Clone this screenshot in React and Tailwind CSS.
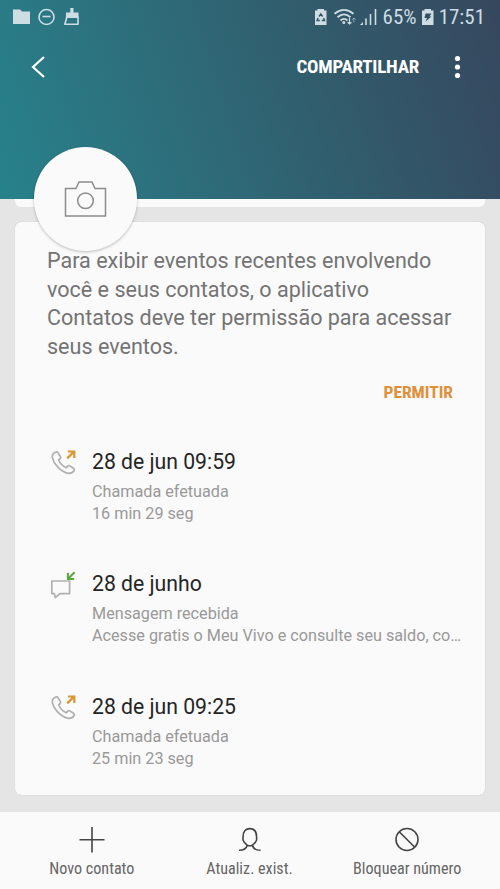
const events = [
  { type: "call", title: "28 de jun 09:59", label: "Chamada efetuada", detail: "16 min 29 seg" },
  {
    type: "message",
    title: "28 de junho",
    label: "Mensagem recebida",
    detail: "Acesse gratis o Meu Vivo e consulte seu saldo, co…",
  },
  { type: "call", title: "28 de jun 09:25", label: "Chamada efetuada", detail: "25 min 23 seg" },
];

function CallIcon() {
  return (
    <svg width="28" height="28" viewBox="0 0 28 28" fill="none">
      <path
        d="M5.8 4.6C3.9 5.6 3 7.4 3.4 9.8C4.6 15.8 11.6 23.6 18.6 25.2C21.6 25.8 23.8 24.6 25.2 22.5C25.6 21.7 25.4 21 24.7 20.5L20.9 17.9C20.1 17.4 19.3 17.6 18.7 18.2L17.2 19.8C14.2 18.4 10.8 14.8 9.6 11.8L11.2 10.5C11.8 10 11.9 9.3 11.5 8.6L9 4.7C8.4 3.9 7 3.9 5.8 4.6Z"
        stroke="#b0b0b0"
        strokeWidth="1.7"
        strokeLinejoin="round"
      />
      <path d="M18.2 10.4L25 3.6M18.8 3.5H25.3V10" stroke="#d99632" strokeWidth="2.2" />
    </svg>
  );
}

function MessageIcon() {
  return (
    <svg width="28" height="30" viewBox="0 0 28 30" fill="none">
      <path d="M2.8 11H20.6V23.6H11L6.2 27.6L5.4 23.6H2.8Z" stroke="#b0b0b0" strokeWidth="1.7" strokeLinejoin="round" />
      <path d="M25.6 2.2L19.3 8.5M18.9 2.8V9H25.2" stroke="#5aa83c" strokeWidth="2" />
    </svg>
  );
}

function StatusBar() {
  return (
    <div className="flex h-[34px] items-center justify-between pl-3 pr-[15px] text-[#cddde3]">
      <svg width="70" height="22" viewBox="12 6 70 22" fill="none">
        <path d="M13 9.5H20L22 11.5H30V24H13Z" fill="currentColor" />
        <circle cx="46.5" cy="17" r="7.5" stroke="currentColor" strokeWidth="1.6" />
        <path d="M42.5 16.5H50.5" stroke="currentColor" strokeWidth="1.6" />
        <path d="M66.5 17V18.5L64.8 24.2H78V17Z" stroke="currentColor" strokeWidth="1.6" strokeLinejoin="round" />
        <path d="M70.3 8H73.5V12.5H78.5V18H66V12.5H70.3Z" fill="currentColor" />
      </svg>
      <div className="flex items-center">
        <svg width="64" height="22" viewBox="314 6 64 22" fill="none">
          <path d="M315 10.5H317.5V9H324V10.5H326.5V25H315Z" fill="currentColor" />
          <path d="M319 16.5L320.8 14L322.6 16.5M323.6 18L324.6 20.5H321.8M319.8 20.5H317L318 18" stroke="#355567" strokeWidth="1.4" />
          <path d="M334.5 13.8Q344 6 353.5 13.8M337.5 17.2Q344 11.5 350.5 17.2M340.5 20.5Q344 17.3 347.5 20.5" stroke="currentColor" strokeWidth="1.8" />
          <circle cx="343.8" cy="22.6" r="1.5" fill="currentColor" />
          <path d="M349.5 18V24M347.6 22.2L349.5 24L351.4 22.2" stroke="currentColor" strokeWidth="1.2" />
          <path d="M353.8 22.5V18M352 19.8L353.8 18L355.6 19.8" stroke="currentColor" strokeWidth="1" opacity=".5" />
          <path d="M360 25L363 22V25Z" fill="currentColor" />
          <path d="M366 25V18.5M370.5 25V14M375.5 25V9" stroke="currentColor" strokeWidth="1.6" />
        </svg>
        <span className="ml-[5px] font-['Roboto_Condensed',Roboto,sans-serif] text-[21px] leading-none">65%</span>
        <svg className="ml-[5px] mr-[5px]" width="12" height="18" viewBox="0 0 12 18">
          <path d="M0 2.5H2.5V1H9V2.5H11.5V17H0Z" fill="currentColor" />
          <path d="M3.5 5.5H9.5L7.5 8.5H9.5L3.5 13.5L5 10H2.5Z" fill="#374f64" />
        </svg>
        <span className="font-['Roboto_Condensed',Roboto,sans-serif] text-[21px] leading-none">17:51</span>
      </div>
    </div>
  );
}

function Header() {
  return (
    <header className="relative h-[199px] bg-linear-[72deg,#27828b_0%,#2d707d_30%,#315c6c_64%,#36475e_100%]">
      <StatusBar />
      <div className="flex h-[66px] items-center pl-[30px] pr-[39.5px] text-white">
        <svg width="16" height="24" viewBox="0 0 16 24" fill="none">
          <path d="M14 2L3 12L14 22" stroke="currentColor" strokeWidth="2.2" />
        </svg>
        <span className="ml-auto font-['Roboto_Condensed',Roboto,sans-serif] text-[19px] font-bold tracking-[-0.25px]">COMPARTILHAR</span>
        <svg className="ml-[34.5px]" width="7" height="24" viewBox="0 0 7 24" fill="currentColor">
          <circle cx="3.5" cy="3.5" r="2.6" />
          <circle cx="3.5" cy="12" r="2.6" />
          <circle cx="3.5" cy="20.5" r="2.6" />
        </svg>
      </div>
      <div className="absolute left-[34px] top-[147px] flex h-[104px] w-[103px] items-center justify-center rounded-full bg-[#fafafa] shadow-[0_1px_3px_rgba(0,0,0,0.25)]">
        <svg width="44" height="38" viewBox="0 0 44 38" fill="none" stroke="#8c8c8c" strokeWidth="1.5">
          <path d="M1.5 8.5H12L15 2H28L31 8.5H41.5V36H1.5Z" />
          <circle cx="21.5" cy="20.7" r="7.8" />
        </svg>
      </div>
    </header>
  );
}

function EventRow({ event }) {
  return (
    <li className="flex h-[122.25px]">
      <div className="w-[45px] shrink-0 pl-0.5">{event.type === "call" ? <CallIcon /> : <MessageIcon />}</div>
      <div className="min-w-0 flex-1 whitespace-nowrap">
        <p className="text-[21.2px] leading-[27px] text-[#252525]">{event.title}</p>
        <p className="mt-1.5 text-[16.2px] leading-[22px] text-[#999]">{event.label}</p>
        <p className="text-[16.2px] leading-[22px] text-[#999]">{event.detail}</p>
      </div>
    </li>
  );
}

function BottomAction({ label, children }) {
  return (
    <button className="flex flex-1 flex-col items-center pt-[13px] text-[#444]">
      {children}
      <span className="mt-[5px] whitespace-nowrap font-['Roboto_Condensed',Roboto,sans-serif] text-[16.1px] leading-[21px] text-[#666]">{label}</span>
    </button>
  );
}

export default function App() {
  return (
    <div className="flex h-[889px] w-[500px] flex-col overflow-hidden bg-[#e5e5e5] font-[Roboto,sans-serif]">
      <Header />
      <main className="flex-1 px-[15px]">
        <div className="h-2 rounded-b-md bg-[#fafafa]" />
        <section className="mt-[15px] h-[573px] rounded-md bg-[#fafafa] pl-8 pr-[23px] pt-[25px] shadow-[0_0_1px_rgba(0,0,0,0.25)]">
          <p className="whitespace-nowrap text-[21.55px] leading-[28.5px] text-[#747474]">
            Para exibir eventos recentes envolvendo
            <br />
            você e seus contatos, o aplicativo
            <br />
            Contatos deve ter permissão para acessar
            <br />
            seus eventos.
          </p>
          <div className="mt-[19px] flex justify-end pr-[9px]">
            <button className="font-['Roboto_Condensed',Roboto,sans-serif] text-[17.4px] font-bold leading-6 text-[#e08f3a]">PERMITIR</button>
          </div>
          <ul className="mt-11">
            {events.map((event) => (
              <EventRow key={event.title} event={event} />
            ))}
          </ul>
        </section>
      </main>
      <nav className="flex h-[77px] bg-[#fafafa] pl-[13px] pr-[14px]">
        <BottomAction label="Novo contato">
          <svg width="28" height="28" viewBox="0 0 28 28" stroke="currentColor" strokeWidth="1.6">
            <path d="M14 2V27.5M1.5 14.7H26.5" />
          </svg>
        </BottomAction>
        <BottomAction label="Atualiz. exist.">
          <svg width="28" height="28" viewBox="0 0 28 28" fill="none" stroke="currentColor" strokeWidth="1.6">
            <path d="M3 25.3C7 25.3 10.5 23.3 11.2 20.2C9.8 19 7.8 17.5 7 15V12C7 6.5 9.5 3.6 13.8 3.6S20.6 6.5 20.6 12V15C19.8 17.5 17.8 19 16.4 20.2C17.1 23.3 20.6 25.3 24.6 25.3M11.2 20.2C13 21 14.6 21 16.4 20.2" />
          </svg>
        </BottomAction>
        <BottomAction label="Bloquear número">
          <svg width="28" height="28" viewBox="0 0 28 28" fill="none" stroke="currentColor" strokeWidth="1.6">
            <circle cx="14" cy="14.5" r="11" />
            <path d="M6.2 6.7L21.8 22.3" />
          </svg>
        </BottomAction>
      </nav>
    </div>
  );
}
